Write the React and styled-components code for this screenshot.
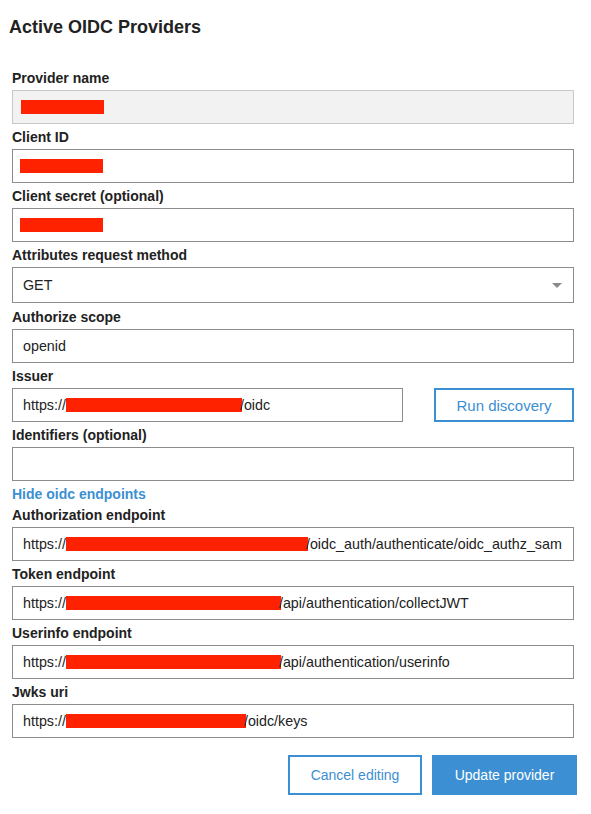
import styled, { createGlobalStyle } from "styled-components";

const GlobalStyle = createGlobalStyle`
  body {
    margin: 0;
    background: #fff;
    font-family: "Liberation Sans", Arial, Helvetica, sans-serif;
    color: #222;
  }
`

const Panel = styled.div`
  width: 562px;
  padding: 16px 0 0 12px;
`

const Title = styled.h2`
  margin: 0 0 32px -3px;
  font-size: 18px;
  line-height: 22px;
  font-weight: bold;
  color: #222;
`

const FieldBlock = styled.div`
  margin-bottom: ${p => p.$gap || 5}px;
`

const Label = styled.div`
  font-size: 14px;
  line-height: 17px;
  font-weight: bold;
  color: #222;
  margin-bottom: 3px;
`

const Field = styled.div`
  box-sizing: border-box;
  position: relative;
  display: flex;
  align-items: center;
  height: ${p => (p.$tall ? "36px" : "34px")};
  width: ${p => p.$width || "100%"};
  padding: 0 10px;
  border: 1px solid ${p => (p.$disabled ? "#c8c8c8" : "#8c8c8c")};
  background: ${p => (p.$disabled ? "#f2f2f2" : "#fff")};
  font-size: 14.3px;
  color: #222;
  white-space: nowrap;
  overflow: hidden;
`

const Redact = styled.span`
  display: inline-block;
  flex: none;
  width: ${p => p.$w}px;
  height: 14px;
  margin: 0 ${p => p.$mr || 0}px 0 ${p => p.$ml || 0}px;
  background: #ff2200;
`

const Caret = styled.span`
  position: absolute;
  right: 11px;
  top: 15px;
  width: 0;
  height: 0;
  border-left: 5px solid transparent;
  border-right: 5px solid transparent;
  border-top: 5px solid #8a8a8a;
`

const IssuerRow = styled.div`
  display: flex;
  justify-content: space-between;
  align-items: center;
`

const OutlineButton = styled.button`
  box-sizing: border-box;
  width: ${p => p.$width}px;
  height: ${p => p.$height}px;
  border: 2px solid #3b8fd2;
  background: #fff;
  color: #3b8fd2;
  font-family: inherit;
  font-size: ${p => p.$size || 14}px;
  padding: 0;
  cursor: pointer;
`

const SolidButton = styled.button`
  box-sizing: border-box;
  width: 145px;
  height: 40px;
  border: none;
  background: #3b8fd2;
  color: #fff;
  font-family: inherit;
  font-size: 14px;
  padding: 0;
  cursor: pointer;
`

const ToggleLink = styled.a`
  display: block;
  font-size: 14px;
  line-height: 17px;
  font-weight: bold;
  color: #3b8fd2;
  margin-bottom: 4px;
  cursor: pointer;
`

const Actions = styled.div`
  display: flex;
  justify-content: flex-end;
  gap: 10px;
  margin: 17px -3px 0 0;
`

const Url = ({ w, rest }) => (
  <>
    https://
    <Redact $w={w} $mr={-2} />
    {rest}
  </>
)

const App = () => {
  return (
    <Panel>
      <GlobalStyle />
      <Title>Active OIDC Providers</Title>

      <FieldBlock>
        <Label>Provider name</Label>
        <Field $disabled>
          <Redact $w={83} $ml={-2} />
        </Field>
      </FieldBlock>

      <FieldBlock>
        <Label>Client ID</Label>
        <Field>
          <Redact $w={83} $ml={-3} />
        </Field>
      </FieldBlock>

      <FieldBlock>
        <Label>Client secret (optional)</Label>
        <Field>
          <Redact $w={83} $ml={-3} />
        </Field>
      </FieldBlock>

      <FieldBlock $gap={6}>
        <Label>Attributes request method</Label>
        <Field $tall>
          GET
          <Caret />
        </Field>
      </FieldBlock>

      <FieldBlock>
        <Label>Authorize scope</Label>
        <Field>openid</Field>
      </FieldBlock>

      <FieldBlock>
        <Label>Issuer</Label>
        <IssuerRow>
          <Field $width="391px">
            <Url w={176} rest="/oidc" />
          </Field>
          <OutlineButton $width={140} $height={34} $size={15}>Run discovery</OutlineButton>
        </IssuerRow>
      </FieldBlock>

      <FieldBlock>
        <Label>Identifiers (optional)</Label>
        <Field />
      </FieldBlock>

      <ToggleLink>Hide oidc endpoints</ToggleLink>

      <FieldBlock>
        <Label>Authorization endpoint</Label>
        <Field>
          <Url w={242} rest="/oidc_auth/authenticate/oidc_authz_sam" />
        </Field>
      </FieldBlock>

      <FieldBlock>
        <Label>Token endpoint</Label>
        <Field>
          <Url w={215} rest="/api/authentication/collectJWT" />
        </Field>
      </FieldBlock>

      <FieldBlock>
        <Label>Userinfo endpoint</Label>
        <Field>
          <Url w={215} rest="/api/authentication/userinfo" />
        </Field>
      </FieldBlock>

      <FieldBlock>
        <Label>Jwks uri</Label>
        <Field>
          <Url w={180} rest="/oidc/keys" />
        </Field>
      </FieldBlock>

      <Actions>
        <OutlineButton $width={134} $height={40}>Cancel editing</OutlineButton>
        <SolidButton>Update provider</SolidButton>
      </Actions>
    </Panel>
  )
}

export default App;
